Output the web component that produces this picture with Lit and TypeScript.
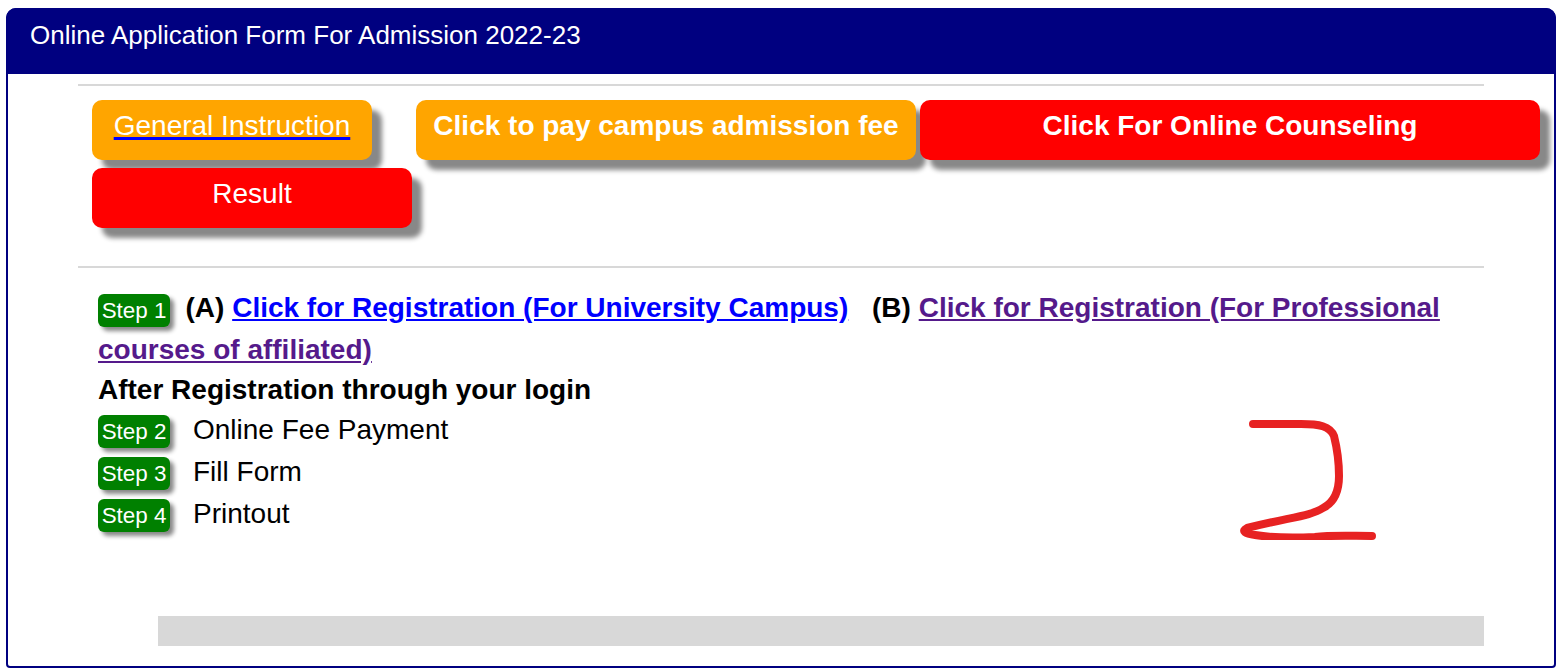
import { LitElement, html, css } from "lit";
import { customElement } from "lit/decorators.js";

@customElement("app-root")
export class AppRoot extends LitElement {
  static styles = css`
    :host {
      display: block;
      font-family: "Liberation Sans", Arial, sans-serif;
      color: #000;
      background: #fff;
      height: 670px;
      overflow: hidden;
    }

    .card {
      position: relative;
      box-sizing: border-box;
      margin: 8px 3px 0 6px;
      height: 660px;
      border: 2px solid #000080;
      border-radius: 10px 10px 4px 4px;
    }

    .head {
      background: #000080;
      color: #fff;
      height: 66px;
      margin: -2px -2px 0;
      border-radius: 10px 10px 0 0;
      padding: 12px 0 0 24px;
      box-sizing: border-box;
      font-size: 26px;
      line-height: 30px;
    }

    .body {
      padding: 10px 70px 0 70px;
    }

    .rule {
      height: 2px;
      background: #d8d8d8;
    }

    .buttons {
      display: flex;
      flex-wrap: wrap;
      gap: 8px 4px;
      width: 1470px;
      height: 180px;
      box-sizing: border-box;
      padding: 14px 0 0 14px;
      align-content: flex-start;
    }

    .btn {
      display: block;
      box-sizing: border-box;
      height: 60px;
      padding-top: 9px;
      border-radius: 10px;
      color: #fff;
      font-size: 28px;
      line-height: 34px;
      text-align: center;
      text-decoration: none;
      box-shadow: 10px 10px 5px #888;
    }

    .orange {
      background: #ffa500;
    }

    .red {
      background: #f00;
    }

    .bold {
      font-weight: bold;
    }

    .general {
      width: 280px;
      margin-right: 40px;
    }

    .general span {
      text-decoration: underline;
      text-decoration-color: #00f;
      text-decoration-thickness: 3px;
    }

    .pay {
      width: 500px;
    }

    .counsel {
      width: 620px;
    }

    .result {
      width: 320px;
    }

    .steps {
      padding: 19px 0 0 20px;
      font-size: 28px;
      line-height: 41px;
    }

    .badge {
      display: inline-block;
      box-sizing: border-box;
      width: 72px;
      height: 33px;
      background: #008000;
      color: #fff;
      border-radius: 6px;
      font-size: 22.4px;
      font-weight: normal;
      line-height: 33px;
      text-align: center;
      vertical-align: -1px;
      box-shadow: 4px 4px 4px #888;
    }

    .lead {
      font-weight: bold;
      line-height: 42px;
    }

    .lead .badge {
      margin-right: 15.5px;
    }

    .lead a {
      color: #00f;
    }

    .lead a.seen {
      color: #551a8b;
    }

    .option {
      margin-left: 16px;
    }

    .after {
      margin-top: -2px;
      line-height: 41px;
    }

    .row {
      display: flex;
      align-items: center;
      height: 42px;
      gap: 23px;
    }

    .label {
      margin-bottom: 4px;
    }

    .bar {
      height: 30px;
      margin-left: 80px;
      margin-top: 80px;
      background: #d8d8d8;
    }

    .mark {
      position: absolute;
      left: 1223px;
      top: 400px;
      width: 150px;
      height: 130px;
    }
  `;

  render() {
    const rows = [
      ["Step 2", "Online Fee Payment"],
      ["Step 3", "Fill Form"],
      ["Step 4", "Printout"],
    ];
    return html`
      <div class="card">
        <div class="head">Online Application Form For Admission 2022-23</div>
        <div class="body">
          <div class="rule"></div>
          <div class="buttons">
            <a class="btn orange general" href="#"><span>General Instruction</span></a>
            <a class="btn orange bold pay" href="#">Click to pay campus admission fee</a>
            <a class="btn red bold counsel" href="#">Click For Online Counseling</a>
            <a class="btn red result" href="#">Result</a>
          </div>
          <div class="rule"></div>
          <div class="steps">
            <div class="lead">
              <span class="badge">Step 1</span>(A)
              <a href="#">Click for Registration (For University Campus)</a>
              <span class="option">(B)</span>
              <a class="seen" href="#">Click for Registration (For Professional courses of affiliated)</a>
            </div>
            <div class="lead after">After Registration through your login</div>
            ${rows.map(
              ([step, label]) => html`
                <div class="row"><span class="badge">${step}</span><span class="label">${label}</span></div>
              `
            )}
          </div>
          <div class="bar"></div>
        </div>
        <svg class="mark" viewBox="0 0 150 130" fill="none">
          <path
            d="M22 14 L70 14 C88 14 99 16 103 26 C106 38 108 52 108 66 C108 80 104 92 92 98 C80 106 60 107 16 118 C10 121 14 124 24 125 C42 128 64 128 84 127 C100 125 120 126 141 126"
            stroke="#e72222"
            stroke-width="8"
            stroke-linecap="round"
            stroke-linejoin="round"
          ></path>
        </svg>
      </div>
    `;
  }
}
